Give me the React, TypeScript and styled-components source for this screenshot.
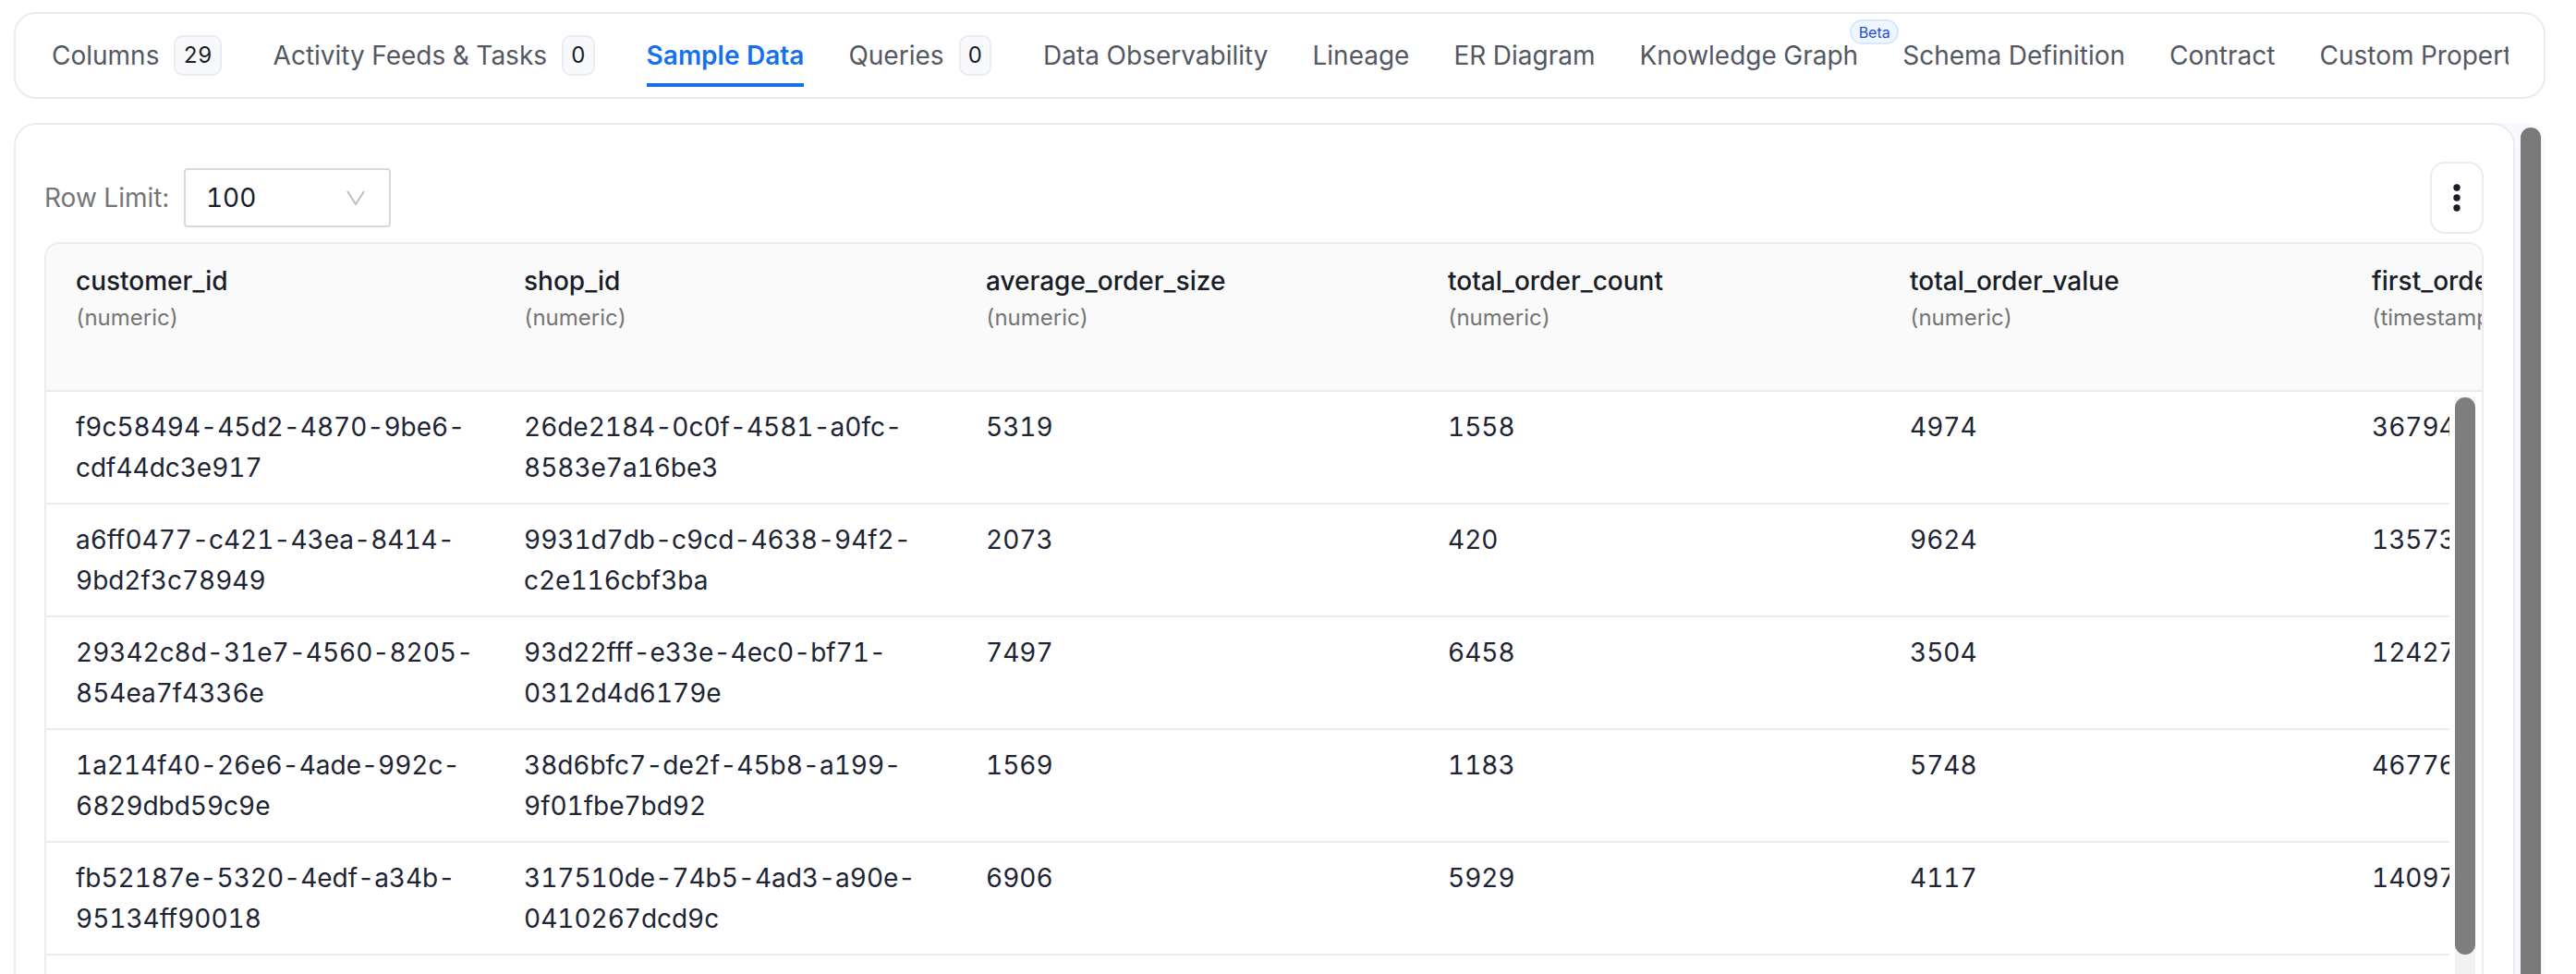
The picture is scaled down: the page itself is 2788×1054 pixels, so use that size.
import styled, { createGlobalStyle } from 'styled-components';

const GlobalStyle = createGlobalStyle`
    html, body {
        margin: 0;
        height: 100%;
        overflow: hidden;
        background: #fff;
    }
    #root {
        height: 100%;
    }
    * {
        box-sizing: border-box;
    }
`;

const Page = styled.div`
    height: 100%;
    padding: 13px 33px 0 15px;
    display: flex;
    flex-direction: column;
    gap: 26px;
    overflow: hidden;
    font-family: Inter, "Noto Sans", sans-serif;
    font-variant-numeric: tabular-nums;
    color: #181d27;
`;

const TabCard = styled.nav`
    flex: none;
    height: 94px;
    padding: 0 38px 0 39px;
    background: #fff;
    border: 2px solid #e9ebf5;
    border-radius: 24px;
`;

const TabStrip = styled.div`
    display: flex;
    gap: 48px;
    height: 79px;
    overflow: hidden;
`;

type TabProps = {
    readonly $active?: boolean
    readonly $counted?: boolean
}
const Tab = styled.div<TabProps>`
    flex: none;
    position: relative;
    display: flex;
    align-items: center;
    gap: 16px;
    height: 79px;
    padding-top: 14px;
    margin-right: ${({ $counted }) => $counted ? '8px' : '0'};
    font-size: 28px;
    white-space: nowrap;
    font-weight: ${({ $active }) => $active ? 600 : 400};
    color: ${({ $active }) => $active ? '#1570ef' : '#535862'};
    border-bottom: 4px solid ${({ $active }) => $active ? '#1570ef' : 'transparent'};
`;

const CountBadge = styled.span`
    min-width: 35px;
    height: 44px;
    padding: 0 8px;
    display: flex;
    align-items: center;
    justify-content: center;
    font-size: 24px;
    color: #181d27;
    background: #f8f9fb;
    border: 2px solid #e9ebf5;
    border-radius: 10px;
`;

const BetaBadge = styled.span`
    position: absolute;
    top: 6px;
    right: -44px;
    width: 53px;
    height: 27px;
    display: flex;
    align-items: center;
    justify-content: center;
    font-size: 16px;
    color: #1d4ed8;
    background: #eff6ff;
    border: 2px solid #d6e8fe;
    border-radius: 14px;
`;

const Shell = styled.div`
    flex: 1;
    min-height: 0;
    display: flex;
    overflow: hidden;
    background: #f8f9fd;
    border-radius: 24px 24px 0 0;
`;

const Panel = styled.section`
    flex: 1;
    min-width: 0;
    height: calc(100% + 40px);
    padding: 40px 32px 0 31px;
    display: flex;
    flex-direction: column;
    gap: 9px;
    background: #fff;
    border: 2px solid #e9ebf5;
    border-radius: 24px;
`;

const PageRail = styled.div`
    flex: none;
    width: 33px;
    padding: 5px 5px 0 6px;
`;

const PageThumb = styled.div`
    height: 100%;
    background: #797979;
    border-radius: 11px 11px 0 0;
`;

const Toolbar = styled.div`
    flex: none;
    display: flex;
    align-items: center;
    justify-content: space-between;
`;

const RowLimit = styled.div`
    display: flex;
    align-items: center;
    gap: 16px;
    font-size: 28px;
    color: #757575;
`;

const Select = styled.div`
    width: 224px;
    height: 64px;
    padding: 0 26px 0 22px;
    display: flex;
    align-items: center;
    justify-content: space-between;
    color: #181d27;
    border: 2px solid #d9d9d9;
    border-radius: 4px;
`;

const MoreButton = styled.button`
    width: 58px;
    height: 78px;
    padding: 0;
    display: flex;
    align-items: center;
    justify-content: center;
    background: #fff;
    border: 2px solid #e9ebf5;
    border-radius: 16px;
`;

const Table = styled.div`
    flex: 1;
    min-height: 0;
    display: flex;
    flex-direction: column;
    overflow: hidden;
    border: 2px solid #ececec;
    border-radius: 16px;
`;

const HeaderRow = styled.div`
    flex: none;
    display: grid;
    grid-template-columns: 485px repeat(5, 500px);
    height: 160px;
    overflow: hidden;
    background: #fafafa;
    border-bottom: 2px solid #ececec;
`;

const HeaderCell = styled.div`
    padding: 20px 16px 0 32px;
    white-space: nowrap;
`;

const ColumnName = styled.div`
    font-size: 28px;
    line-height: 40px;
    font-weight: 500;
    color: #181d27;
`;

const ColumnType = styled.div`
    margin-top: 2px;
    font-size: 24px;
    line-height: 36px;
    color: #757575;
`;

const BodyArea = styled.div`
    flex: 1;
    min-height: 0;
    display: flex;
`;

const Rows = styled.div`
    flex: 1;
    min-width: 0;
    overflow: hidden;
`;

const Row = styled.div`
    display: grid;
    grid-template-columns: 485px repeat(5, 500px);
    border-bottom: 2px solid #ececec;
`;

const Cell = styled.div`
    padding: 16px 16px 16px 32px;
    font-size: 28px;
    line-height: 44px;
    letter-spacing: -0.03px;
    color: #1d2433;
`;

const TableRail = styled.div`
    flex: none;
    width: 35px;
    padding: 6px 7px 0 6px;
`;

const TableTrack = styled.div`
    height: 100%;
    background: #f2f2f2;
`;

const TableThumb = styled.div`
    height: 603px;
    background: #7f7f7f;
    border-radius: 11px;
`;

type TabItem = {
    label: string
    count?: number
    beta?: boolean
    active?: boolean
}

const tabs: TabItem[] = [
    { label: 'Columns', count: 29 },
    { label: 'Activity Feeds & Tasks', count: 0 },
    { label: 'Sample Data', active: true },
    { label: 'Queries', count: 0 },
    { label: 'Data Observability' },
    { label: 'Lineage' },
    { label: 'ER Diagram' },
    { label: 'Knowledge Graph', beta: true },
    { label: 'Schema Definition' },
    { label: 'Contract' },
    { label: 'Custom Properties' },
];

const columns = [
    ['customer_id', 'numeric'],
    ['shop_id', 'numeric'],
    ['average_order_size', 'numeric'],
    ['total_order_count', 'numeric'],
    ['total_order_value', 'numeric'],
    ['first_order_date', 'timestamp'],
];

const rows = [
    ['f9c58494-45d2-4870-9be6-cdf44dc3e917', '26de2184-0c0f-4581-a0fc-8583e7a16be3', '5319', '1558', '4974', '36794'],
    ['a6ff0477-c421-43ea-8414-9bd2f3c78949', '9931d7db-c9cd-4638-94f2-c2e116cbf3ba', '2073', '420', '9624', '13573'],
    ['29342c8d-31e7-4560-8205-854ea7f4336e', '93d22fff-e33e-4ec0-bf71-0312d4d6179e', '7497', '6458', '3504', '12427'],
    ['1a214f40-26e6-4ade-992c-6829dbd59c9e', '38d6bfc7-de2f-45b8-a199-9f01fbe7bd92', '1569', '1183', '5748', '46776'],
    ['fb52187e-5320-4edf-a34b-95134ff90018', '317510de-74b5-4ad3-a90e-0410267dcd9c', '6906', '5929', '4117', '14097'],
];

export default function App() {
    return (
        <>
            <GlobalStyle />
            <Page>
                <TabCard>
                    <TabStrip>
                        {tabs.map(tab => (
                            <Tab key={tab.label} $active={tab.active} $counted={tab.count !== undefined}>
                                {tab.label}
                                {tab.count !== undefined && <CountBadge>{tab.count}</CountBadge>}
                                {tab.beta && <BetaBadge>Beta</BetaBadge>}
                            </Tab>
                        ))}
                    </TabStrip>
                </TabCard>
                <Shell>
                    <Panel>
                        <Toolbar>
                            <RowLimit>
                                Row Limit:
                                <Select>
                                    100
                                    <svg width="20" height="16" viewBox="0 0 20 16" fill="none">
                                        <path d="M1 1l9 14 9-14" stroke="#bfbfbf" strokeWidth="2" />
                                    </svg>
                                </Select>
                            </RowLimit>
                            <MoreButton aria-label="More">
                                <svg width="8" height="30" viewBox="0 0 8 30" fill="#181d27">
                                    <circle cx="4" cy="4" r="3.7" />
                                    <circle cx="4" cy="15" r="3.7" />
                                    <circle cx="4" cy="26" r="3.7" />
                                </svg>
                            </MoreButton>
                        </Toolbar>
                        <Table>
                            <HeaderRow>
                                {columns.map(([name, type]) => (
                                    <HeaderCell key={name}>
                                        <ColumnName>{name}</ColumnName>
                                        <ColumnType>({type})</ColumnType>
                                    </HeaderCell>
                                ))}
                            </HeaderRow>
                            <BodyArea>
                                <Rows>
                                    {rows.map(row => (
                                        <Row key={row[0]}>
                                            {row.map(value => <Cell key={value}>{value}</Cell>)}
                                        </Row>
                                    ))}
                                </Rows>
                                <TableRail>
                                    <TableTrack>
                                        <TableThumb />
                                    </TableTrack>
                                </TableRail>
                            </BodyArea>
                        </Table>
                    </Panel>
                    <PageRail>
                        <PageThumb />
                    </PageRail>
                </Shell>
            </Page>
        </>
    );
}
